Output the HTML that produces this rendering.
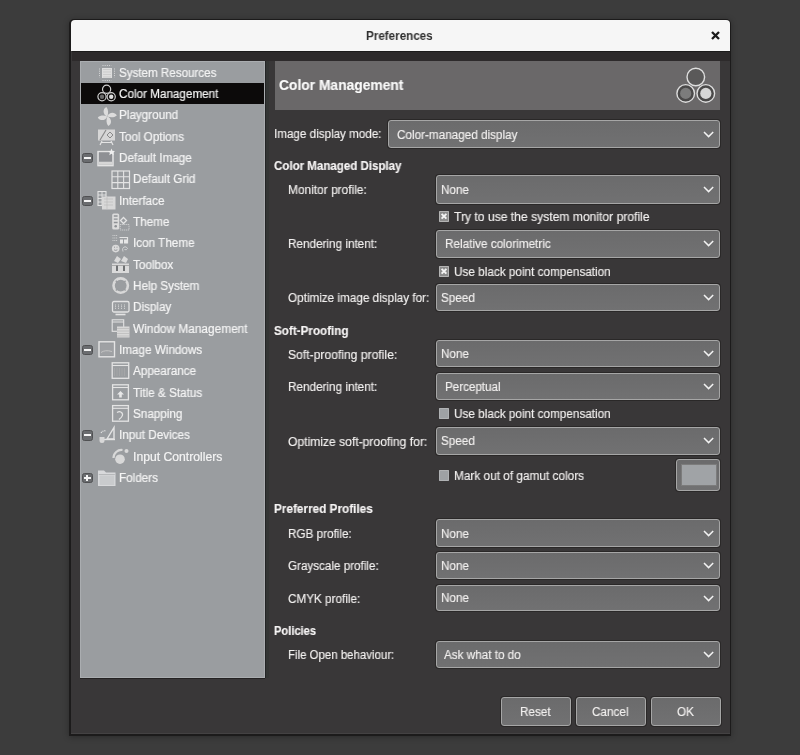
<!DOCTYPE html>
<html><head><meta charset="utf-8"><style>
html,body{margin:0;padding:0;width:800px;height:755px;overflow:hidden;background:#3c3c3c;}
body{position:relative;font-family:"Liberation Sans",sans-serif;}
.t{position:absolute;white-space:nowrap;transform-origin:0 0;will-change:transform;}
.ic{position:absolute;}
.cb{position:absolute;box-sizing:border-box;background:linear-gradient(#6b6b6c,#717172);border:1px solid #a6a6a6;border-radius:3px;box-shadow:0 0 0 1px #2a2828;}
</style></head><body>
<div style="position:absolute;left:69.2px;top:19px;width:662.3px;height:717px;background:#1c1b1b;border-radius:5px 5px 0 0;box-shadow:0 1px 6px rgba(0,0,0,0.3)"></div>
<div style="position:absolute;left:71.25px;top:20px;width:658.5px;height:713.8px;background:#393738;border-radius:4px 4px 0 0"></div>
<div style="position:absolute;left:71px;top:20px;width:659px;height:30.5px;background:#f6f6f6;border-radius:4px 4px 0 0"></div>
<div style="position:absolute;left:71.5px;top:50.5px;width:658px;height:10.5px;background:#2d2a2b"></div>
<div style="position:absolute;left:71.5px;top:50.5px;width:658px;height:1px;background:#1c1b1b"></div>
<div style="position:absolute;left:71.25px;top:732.6px;width:658.5px;height:1px;background:#444243"></div>
<div class="t" style="left:366.00px;top:29.84px;font-size:12px;line-height:12px;font-weight:bold;color:#303030;transform:scaleX(0.9706);">Preferences</div>
<svg style="position:absolute;left:711px;top:31px" width="9" height="9" viewBox="0 0 9 9"><path d="M1 1L8 8M8 1L1 8" stroke="#1a1a1a" stroke-width="2.3"/></svg>
<div style="position:absolute;left:80px;top:61px;width:185px;height:617px;background:#9a9da0;box-shadow:inset 0 0 0 1px #aaadb0"></div>
<div style="position:absolute;left:265px;top:61px;width:3.5px;height:617px;background:linear-gradient(90deg,#232526 0,#232526 1px,#333534 1px)"></div>
<div style="position:absolute;left:80px;top:678px;width:185px;height:1px;background:#242222"></div>
<div style="position:absolute;left:81px;top:83px;width:183px;height:21px;background:#0c0a0a"></div>
<div class="t" style="left:118.60px;top:66.74px;font-size:12px;line-height:12px;font-weight:normal;color:#f4f4f4;transform:scaleX(0.9672);-webkit-text-stroke:0.2px #f4f4f4;">System Resources</div>
<svg class="ic" style="left:97.00px;top:63.00px" width="20" height="20" viewBox="0 0 20 20"><rect x="5" y="5" width="10" height="10" fill="#dedede"/>
<path d="M6 6.5h8M6 9h8M6 11.5h8M6 14h8" stroke="#c4c4c4" stroke-width="0.7"/>
<path d="M5.5 2.5h9M5.5 17.5h9" stroke="#e4e4e4" stroke-width="1" stroke-dasharray="1 1.2" opacity="0.8"/>
<path d="M2.5 5.5v9M17.5 5.5v9" stroke="#e4e4e4" stroke-width="1" stroke-dasharray="1 1.2" opacity="0.8"/></svg>
<div class="t" style="left:118.60px;top:88.06px;font-size:12px;line-height:12px;font-weight:normal;color:#f4f4f4;transform:scaleX(0.9739);-webkit-text-stroke:0.2px #f4f4f4;">Color Management</div>
<svg class="ic" style="left:97.00px;top:84.32px" width="20" height="20" viewBox="0 0 20 20"><circle cx="9.6" cy="5.2" r="4.1" fill="#0c0a0a" stroke="#d0d0d0" stroke-width="1.2"/>
<circle cx="5" cy="12.8" r="4.1" fill="#0c0a0a" stroke="#d0d0d0" stroke-width="1.2"/>
<circle cx="5" cy="12.8" r="2.2" fill="#6a6a6a"/>
<circle cx="14.2" cy="12.8" r="4.1" fill="#0c0a0a" stroke="#d0d0d0" stroke-width="1.2"/>
<circle cx="14.2" cy="12.8" r="2.2" fill="#e0e0e0"/></svg>
<div class="t" style="left:118.60px;top:109.38px;font-size:12px;line-height:12px;font-weight:normal;color:#f4f4f4;transform:scaleX(0.9750);-webkit-text-stroke:0.2px #f4f4f4;">Playground</div>
<svg class="ic" style="left:97.00px;top:105.64px" width="20" height="20" viewBox="0 0 20 20"><g fill="#dcdcdc" transform="translate(10.3 10.4)">
<path d="M0 0C-4.5 -1.5 -5 -7.5 -1 -9.5C1.2 -7 1.2 -3 0 0Z"/>
<path d="M0 0C-4.5 -1.5 -5 -7.5 -1 -9.5C1.2 -7 1.2 -3 0 0Z" transform="rotate(90)"/>
<path d="M0 0C-4.5 -1.5 -5 -7.5 -1 -9.5C1.2 -7 1.2 -3 0 0Z" transform="rotate(180)"/>
<path d="M0 0C-4.5 -1.5 -5 -7.5 -1 -9.5C1.2 -7 1.2 -3 0 0Z" transform="rotate(270)"/>
</g></svg>
<div class="t" style="left:118.60px;top:130.70px;font-size:12px;line-height:12px;font-weight:normal;color:#f4f4f4;transform:scaleX(0.9750);-webkit-text-stroke:0.2px #f4f4f4;">Tool Options</div>
<svg class="ic" style="left:97.00px;top:126.96px" width="20" height="20" viewBox="0 0 20 20"><rect x="1" y="2.5" width="17" height="11" fill="#d6d6d6"/>
<path d="M3 13L9 3" stroke="#8a8a8a" stroke-width="1.2"/>
<path d="M10 8l3-3 3 3-3 3z" fill="none" stroke="#8a8a8a" stroke-width="1"/>
<path d="M3 18L5 14M16 18L14 14M4 15.5h11" stroke="#e4e4e4" stroke-width="1.2"/></svg>
<div class="t" style="left:118.60px;top:152.02px;font-size:12px;line-height:12px;font-weight:normal;color:#f4f4f4;transform:scaleX(0.9750);-webkit-text-stroke:0.2px #f4f4f4;">Default Image</div>
<svg class="ic" style="left:97.00px;top:148.28px" width="20" height="20" viewBox="0 0 20 20"><rect x="1" y="3.6" width="15" height="14" fill="none" stroke="#e4e4e4" stroke-width="1.5"/>
<rect x="2" y="4.5" width="13" height="9" fill="#8e9094"/>
<rect x="2" y="13.8" width="13" height="3" fill="#d6d6d6"/>
<path d="M14.5 0.5l1 2.4 2.5 0.2-1.9 1.6 0.6 2.5-2.2-1.4-2.2 1.4 0.6-2.5-1.9-1.6 2.5-0.2z" fill="#efefef"/></svg>
<div style="position:absolute;left:82.2px;top:152.9px;width:10.6px;height:10.6px;background:#6a6c6f;border-radius:2.5px;border:1px solid #505153;box-sizing:border-box"></div>
<div style="position:absolute;left:84.2px;top:157.2px;width:6.4px;height:2px;background:#f4f4f4"></div>
<div class="t" style="left:132.60px;top:173.34px;font-size:12px;line-height:12px;font-weight:normal;color:#f4f4f4;transform:scaleX(0.9750);-webkit-text-stroke:0.2px #f4f4f4;">Default Grid</div>
<svg class="ic" style="left:111.30px;top:169.60px" width="20" height="20" viewBox="0 0 20 20"><rect x="1" y="1" width="17.5" height="17.5" fill="none" stroke="#e4e4e4" stroke-width="1.2"/>
<path d="M6.8 1v17.5M12.6 1v17.5M1 6.8h17.5M1 12.6h17.5" stroke="#e4e4e4" stroke-width="1.1"/></svg>
<div class="t" style="left:118.60px;top:194.66px;font-size:12px;line-height:12px;font-weight:normal;color:#f4f4f4;transform:scaleX(0.9750);-webkit-text-stroke:0.2px #f4f4f4;">Interface</div>
<svg class="ic" style="left:97.00px;top:190.92px" width="20" height="20" viewBox="0 0 20 20"><rect x="1" y="0.5" width="8" height="14" fill="none" stroke="#e4e4e4" stroke-width="1.1"/>
<path d="M1 4h8M1 7.5h8M1 11h8M5 0.5v14" stroke="#e4e4e4" stroke-width="0.9"/>
<rect x="5" y="5.5" width="13.5" height="13" fill="#d8d8d8"/>
<path d="M7 8h9M7 11h9M7 14h9M10 6v12" stroke="#b8b8b8" stroke-width="0.6"/></svg>
<div style="position:absolute;left:82.2px;top:195.5px;width:10.6px;height:10.6px;background:#6a6c6f;border-radius:2.5px;border:1px solid #505153;box-sizing:border-box"></div>
<div style="position:absolute;left:84.2px;top:199.8px;width:6.4px;height:2px;background:#f4f4f4"></div>
<div class="t" style="left:132.60px;top:215.98px;font-size:12px;line-height:12px;font-weight:normal;color:#f4f4f4;transform:scaleX(0.9750);-webkit-text-stroke:0.2px #f4f4f4;">Theme</div>
<svg class="ic" style="left:111.30px;top:212.24px" width="20" height="20" viewBox="0 0 20 20"><rect x="1.2" y="1.5" width="7" height="16" rx="1.5" fill="#dcdcdc"/>
<path d="M2.8 4h3.8M2.8 7.2h3.8M2.8 10.5h3.8" stroke="#8e9195" stroke-width="1.3"/>
<circle cx="4.7" cy="14.3" r="1.3" fill="#8e9195"/>
<path d="M12.5 5.5l3 3-3 3-3-3z" fill="none" stroke="#e4e4e4" stroke-width="1.3"/>
<rect x="9.2" y="12.5" width="8.8" height="5.5" fill="none" stroke="#e4e4e4" stroke-width="0.9" stroke-dasharray="1.2 0.8" opacity="0.8"/></svg>
<div class="t" style="left:132.60px;top:237.30px;font-size:12px;line-height:12px;font-weight:normal;color:#f4f4f4;transform:scaleX(0.9750);-webkit-text-stroke:0.2px #f4f4f4;">Icon Theme</div>
<svg class="ic" style="left:111.30px;top:233.56px" width="20" height="20" viewBox="0 0 20 20"><path d="M1.5 1.5h5M1.5 4h5M1.5 6.5h5" stroke="#e4e4e4" stroke-width="0.9" stroke-dasharray="1 0.8" opacity="0.8"/>
<path d="M8.5 3.5h8v6" fill="none" stroke="#e4e4e4" stroke-width="1.2"/>
<path d="M9 5.5h3v4h-3zM13 5.5h3v4h-3z" fill="#e6e6e6"/>
<circle cx="4.7" cy="14.6" r="3.8" fill="#dadada"/>
<path d="M3 13.2h1M5.5 13.2h1M3 15.8q1.7 1.2 3.4 0" stroke="#8e9195" stroke-width="0.9" fill="none"/>
<path d="M12 17.5q-1.5-3 1-4.5 2.5-1 3.5 1.5q-1 2-3 1" stroke="#e4e4e4" stroke-width="1" fill="none" opacity="0.7"/></svg>
<div class="t" style="left:132.60px;top:258.62px;font-size:12px;line-height:12px;font-weight:normal;color:#f4f4f4;transform:scaleX(0.9750);-webkit-text-stroke:0.2px #f4f4f4;">Toolbox</div>
<svg class="ic" style="left:111.30px;top:254.88px" width="20" height="20" viewBox="0 0 20 20"><path d="M3 6l3-5 4 3-3 4z" fill="#dadada"/><path d="M10 6l3-5 4 3-2 4z" fill="#dadada"/>
<rect x="1" y="8.5" width="17" height="9.5" fill="#dadada"/>
<path d="M6 10v6M13 10v6" stroke="#707274" stroke-width="2"/>
<path d="M1 10.5h17" stroke="#9a9a9a" stroke-width="0.8"/></svg>
<div class="t" style="left:132.60px;top:279.94px;font-size:12px;line-height:12px;font-weight:normal;color:#f4f4f4;transform:scaleX(0.9750);-webkit-text-stroke:0.2px #f4f4f4;">Help System</div>
<svg class="ic" style="left:111.30px;top:276.20px" width="20" height="20" viewBox="0 0 20 20"><circle cx="9.7" cy="9.6" r="7.2" fill="none" stroke="#d8d8d8" stroke-width="2.6"/>
<path d="M4.8 4.7l2 2M14.6 4.7l-2 2M4.8 14.5l2-2M14.6 14.5l-2-2" stroke="#9a9c9f" stroke-width="1.4"/></svg>
<div class="t" style="left:132.60px;top:301.26px;font-size:12px;line-height:12px;font-weight:normal;color:#f4f4f4;transform:scaleX(0.9750);-webkit-text-stroke:0.2px #f4f4f4;">Display</div>
<svg class="ic" style="left:111.30px;top:297.52px" width="20" height="20" viewBox="0 0 20 20"><rect x="1.5" y="3.5" width="16.5" height="10.5" rx="1.5" fill="none" stroke="#e4e4e4" stroke-width="1.3"/>
<path d="M4.5 6.5v5M7.5 6.5v5M10.5 6.5v5M13.5 6.5v5" stroke="#e4e4e4" stroke-width="0.8" stroke-dasharray="1 0.7"/>
<path d="M4.5 16.5h10" stroke="#e4e4e4" stroke-width="1.6"/></svg>
<div class="t" style="left:132.60px;top:322.58px;font-size:12px;line-height:12px;font-weight:normal;color:#f4f4f4;transform:scaleX(0.9865);-webkit-text-stroke:0.2px #f4f4f4;">Window Management</div>
<svg class="ic" style="left:111.30px;top:318.84px" width="20" height="20" viewBox="0 0 20 20"><rect x="1.2" y="0.8" width="11.5" height="11.5" fill="none" stroke="#e4e4e4" stroke-width="1.1"/>
<path d="M1.2 3h11.5" stroke="#e4e4e4" stroke-width="1"/>
<rect x="6" y="7.5" width="12.5" height="11" fill="#d8d8d8"/>
<path d="M6 9.5h12.5M6 12h12.5M6 14.5h12.5M6 17h12.5" stroke="#b4b4b4" stroke-width="0.6"/></svg>
<div class="t" style="left:118.60px;top:343.90px;font-size:12px;line-height:12px;font-weight:normal;color:#f4f4f4;transform:scaleX(0.9750);-webkit-text-stroke:0.2px #f4f4f4;">Image Windows</div>
<svg class="ic" style="left:97.00px;top:340.16px" width="20" height="20" viewBox="0 0 20 20"><rect x="2" y="1.8" width="15.5" height="15" fill="none" stroke="#e4e4e4" stroke-width="1.4"/>
<rect x="3.5" y="4" width="12.5" height="11" fill="#9fa1a4"/>
<path d="M4 12.5q4-3 11-1" stroke="#c4c4c4" stroke-width="1" fill="none"/></svg>
<div style="position:absolute;left:82.2px;top:344.8px;width:10.6px;height:10.6px;background:#6a6c6f;border-radius:2.5px;border:1px solid #505153;box-sizing:border-box"></div>
<div style="position:absolute;left:84.2px;top:349.1px;width:6.4px;height:2px;background:#f4f4f4"></div>
<div class="t" style="left:132.60px;top:365.22px;font-size:12px;line-height:12px;font-weight:normal;color:#f4f4f4;transform:scaleX(0.9750);-webkit-text-stroke:0.2px #f4f4f4;">Appearance</div>
<svg class="ic" style="left:111.30px;top:361.48px" width="20" height="20" viewBox="0 0 20 20"><rect x="1.2" y="1.8" width="16.5" height="15.5" fill="none" stroke="#e4e4e4" stroke-width="1.3"/>
<path d="M1.2 4.5h16.5" stroke="#e4e4e4" stroke-width="1.1"/>
<path d="M3.5 7v8M6 7v8M8.5 7v8M11 7v8M13.5 7v8" stroke="#acacac" stroke-width="0.6"/></svg>
<div class="t" style="left:132.60px;top:386.54px;font-size:12px;line-height:12px;font-weight:normal;color:#f4f4f4;transform:scaleX(0.9750);-webkit-text-stroke:0.2px #f4f4f4;">Title &amp; Status</div>
<svg class="ic" style="left:111.30px;top:382.80px" width="20" height="20" viewBox="0 0 20 20"><rect x="1.6" y="1.8" width="15.8" height="15" fill="none" stroke="#e4e4e4" stroke-width="1.3"/>
<path d="M1.6 4.5h15.8" stroke="#e4e4e4" stroke-width="1.1"/>
<path d="M9.5 8l3.5 3.5h-2.2v3h-2.6v-3h-2.2z" fill="#e8e8e8"/></svg>
<div class="t" style="left:132.60px;top:407.86px;font-size:12px;line-height:12px;font-weight:normal;color:#f4f4f4;transform:scaleX(0.9750);-webkit-text-stroke:0.2px #f4f4f4;">Snapping</div>
<svg class="ic" style="left:111.30px;top:404.12px" width="20" height="20" viewBox="0 0 20 20"><rect x="1.6" y="1.6" width="15.8" height="15.6" fill="none" stroke="#e4e4e4" stroke-width="1.3"/>
<path d="M1.6 4.3h15.8" stroke="#e4e4e4" stroke-width="1.1"/>
<path d="M6 8.5q3-2 5 0.5t-3 6.5" stroke="#e4e4e4" stroke-width="1.3" fill="none"/></svg>
<div class="t" style="left:118.60px;top:429.18px;font-size:12px;line-height:12px;font-weight:normal;color:#f4f4f4;transform:scaleX(0.9750);-webkit-text-stroke:0.2px #f4f4f4;">Input Devices</div>
<svg class="ic" style="left:97.00px;top:425.44px" width="20" height="20" viewBox="0 0 20 20"><path d="M10 14L17 2.5V14z" fill="none" stroke="#e4e4e4" stroke-width="1.4"/>
<path d="M4 8q2-3 5-2" stroke="#e4e4e4" stroke-width="1.1" fill="none" stroke-dasharray="1.2 0.8"/>
<path d="M6 14.5h12" stroke="#e4e4e4" stroke-width="1.4"/>
<path d="M2.5 12h5v3.5a2.5 2.5 0 0 1-5 0z" fill="#d8d8d8"/></svg>
<div style="position:absolute;left:82.2px;top:430.0px;width:10.6px;height:10.6px;background:#6a6c6f;border-radius:2.5px;border:1px solid #505153;box-sizing:border-box"></div>
<div style="position:absolute;left:84.2px;top:434.3px;width:6.4px;height:2px;background:#f4f4f4"></div>
<div class="t" style="left:132.60px;top:450.50px;font-size:12px;line-height:12px;font-weight:normal;color:#f4f4f4;transform:scaleX(1.0142);-webkit-text-stroke:0.2px #f4f4f4;">Input Controllers</div>
<svg class="ic" style="left:111.30px;top:446.76px" width="20" height="20" viewBox="0 0 20 20"><path d="M2.5 11a8 8 0 0 1 9-8" stroke="#d8d8d8" stroke-width="2.2" fill="none"/>
<circle cx="9" cy="12.2" r="4.8" fill="#d8d8d8"/>
<circle cx="15.5" cy="4" r="2" fill="#d8d8d8"/></svg>
<div class="t" style="left:118.60px;top:471.82px;font-size:12px;line-height:12px;font-weight:normal;color:#f4f4f4;transform:scaleX(0.9750);-webkit-text-stroke:0.2px #f4f4f4;">Folders</div>
<svg class="ic" style="left:97.00px;top:468.08px" width="20" height="20" viewBox="0 0 20 20"><path d="M1 2.5h6l2 2h9.5v13.5H1z" fill="#d8d9db"/>
<path d="M1.8 6.5h16" stroke="#b6b8ba" stroke-width="1"/>
<rect x="2.6" y="7.5" width="14.6" height="9.5" fill="#c9cbcd"/></svg>
<div style="position:absolute;left:82.2px;top:472.7px;width:10.6px;height:10.6px;background:#6a6c6f;border-radius:2.5px;border:1px solid #505153;box-sizing:border-box"></div>
<div style="position:absolute;left:84.2px;top:477.0px;width:6.4px;height:2px;background:#f4f4f4"></div>
<div style="position:absolute;left:86.4px;top:474.8px;width:2px;height:6.4px;background:#f4f4f4"></div>
<div style="position:absolute;left:275px;top:61px;width:445px;height:49px;background:#6a6869"></div>
<div class="t" style="left:279.45px;top:78.05px;font-size:14px;line-height:14px;font-weight:bold;color:#fafafa;transform:scaleX(0.9872);-webkit-text-stroke:0.15px #fafafa;">Color Management</div>
<svg style="position:absolute;left:672px;top:62px" width="48" height="46" viewBox="672 62 48 46">
<circle cx="695.8" cy="77" r="8.8" fill="#5a5959" stroke="#dedede" stroke-width="1.4"/>
<circle cx="685.7" cy="93.4" r="8.8" fill="#4a4949" stroke="#dedede" stroke-width="1.4"/>
<circle cx="685.7" cy="93.4" r="5.6" fill="#7c7c7c"/>
<circle cx="705.8" cy="93.4" r="8.8" fill="#4a4949" stroke="#dedede" stroke-width="1.4"/>
<circle cx="705.8" cy="93.4" r="5.6" fill="#d6d6d6"/>
</svg>
<div class="t" style="left:274.20px;top:127.62px;font-size:12.5px;line-height:12.5px;font-weight:normal;color:#f2f0ef;transform:scaleX(0.9320);-webkit-text-stroke:0.15px #f2f0ef;">Image display mode:</div>
<div class="cb" style="left:388.0px;top:120.0px;width:332.0px;height:28.0px"></div>
<svg style="position:absolute;left:702.5px;top:130.7px" width="12" height="7" viewBox="0 0 12 7"><path d="M1 1L5.6 5.6L10.2 1" fill="none" stroke="#f2f2f2" stroke-width="1.5"/></svg>
<div class="t" style="left:396.70px;top:128.52px;font-size:12.5px;line-height:12.5px;font-weight:normal;color:#f2f0ef;transform:scaleX(0.9374);-webkit-text-stroke:0.15px #f2f0ef;">Color-managed display</div>
<div class="t" style="left:274.20px;top:160.12px;font-size:12.5px;line-height:12.5px;font-weight:bold;color:#f6f4f4;transform:scaleX(0.9223);-webkit-text-stroke:0.15px #f6f4f4;">Color Managed Display</div>
<div class="t" style="left:287.95px;top:183.87px;font-size:12.5px;line-height:12.5px;font-weight:normal;color:#f2f0ef;transform:scaleX(0.9524);-webkit-text-stroke:0.15px #f2f0ef;">Monitor profile:</div>
<div class="cb" style="left:435.5px;top:175.3px;width:284.5px;height:28.7px"></div>
<svg style="position:absolute;left:702.5px;top:186.3px" width="12" height="7" viewBox="0 0 12 7"><path d="M1 1L5.6 5.6L10.2 1" fill="none" stroke="#f2f2f2" stroke-width="1.5"/></svg>
<div class="t" style="left:440.80px;top:184.17px;font-size:12.5px;line-height:12.5px;font-weight:normal;color:#f2f0ef;transform:scaleX(0.9334);-webkit-text-stroke:0.15px #f2f0ef;">None</div>
<div style="position:absolute;left:438.5px;top:211.0px;width:10px;height:10.5px;background:#8c8c8c;box-shadow:inset 0 0 0 1px #b4b4b4;border-radius:1px"></div>
<svg style="position:absolute;left:438.5px;top:211.0px" width="10" height="10.5" viewBox="0 0 10 10.5"><path d="M2.6 2.8L7.4 7.7M7.4 2.8L2.6 7.7" stroke="#f4f4f4" stroke-width="1.9"/></svg>
<div class="t" style="left:453.80px;top:210.82px;font-size:12.5px;line-height:12.5px;font-weight:normal;color:#f2f0ef;transform:scaleX(0.9697);-webkit-text-stroke:0.15px #f2f0ef;">Try to use the system monitor profile</div>
<div class="t" style="left:287.95px;top:238.12px;font-size:12.5px;line-height:12.5px;font-weight:normal;color:#f2f0ef;transform:scaleX(0.9375);-webkit-text-stroke:0.15px #f2f0ef;">Rendering intent:</div>
<div class="cb" style="left:435.5px;top:230.0px;width:284.5px;height:27.5px"></div>
<svg style="position:absolute;left:702.5px;top:240.4px" width="12" height="7" viewBox="0 0 12 7"><path d="M1 1L5.6 5.6L10.2 1" fill="none" stroke="#f2f2f2" stroke-width="1.5"/></svg>
<div class="t" style="left:444.50px;top:238.27px;font-size:12.5px;line-height:12.5px;font-weight:normal;color:#f2f0ef;transform:scaleX(0.9402);-webkit-text-stroke:0.15px #f2f0ef;">Relative colorimetric</div>
<div style="position:absolute;left:438.5px;top:266.0px;width:10px;height:10.5px;background:#8c8c8c;box-shadow:inset 0 0 0 1px #b4b4b4;border-radius:1px"></div>
<svg style="position:absolute;left:438.5px;top:266.0px" width="10" height="10.5" viewBox="0 0 10 10.5"><path d="M2.6 2.8L7.4 7.7M7.4 2.8L2.6 7.7" stroke="#f4f4f4" stroke-width="1.9"/></svg>
<div class="t" style="left:453.80px;top:265.82px;font-size:12.5px;line-height:12.5px;font-weight:normal;color:#f2f0ef;transform:scaleX(0.9399);-webkit-text-stroke:0.15px #f2f0ef;">Use black point compensation</div>
<div class="t" style="left:287.95px;top:292.12px;font-size:12.5px;line-height:12.5px;font-weight:normal;color:#f2f0ef;transform:scaleX(0.9369);-webkit-text-stroke:0.15px #f2f0ef;">Optimize image display for:</div>
<div class="cb" style="left:435.5px;top:284.0px;width:284.5px;height:27.0px"></div>
<svg style="position:absolute;left:702.5px;top:294.2px" width="12" height="7" viewBox="0 0 12 7"><path d="M1 1L5.6 5.6L10.2 1" fill="none" stroke="#f2f2f2" stroke-width="1.5"/></svg>
<div class="t" style="left:440.80px;top:292.02px;font-size:12.5px;line-height:12.5px;font-weight:normal;color:#f2f0ef;transform:scaleX(0.9358);-webkit-text-stroke:0.15px #f2f0ef;">Speed</div>
<div class="t" style="left:274.20px;top:324.62px;font-size:12.5px;line-height:12.5px;font-weight:bold;color:#f6f4f4;transform:scaleX(0.9331);-webkit-text-stroke:0.15px #f6f4f4;">Soft-Proofing</div>
<div class="t" style="left:287.95px;top:348.87px;font-size:12.5px;line-height:12.5px;font-weight:normal;color:#f2f0ef;transform:scaleX(0.9706);-webkit-text-stroke:0.15px #f2f0ef;">Soft-proofing profile:</div>
<div class="cb" style="left:435.5px;top:340.0px;width:284.5px;height:27.0px"></div>
<svg style="position:absolute;left:702.5px;top:350.2px" width="12" height="7" viewBox="0 0 12 7"><path d="M1 1L5.6 5.6L10.2 1" fill="none" stroke="#f2f2f2" stroke-width="1.5"/></svg>
<div class="t" style="left:440.80px;top:348.02px;font-size:12.5px;line-height:12.5px;font-weight:normal;color:#f2f0ef;transform:scaleX(0.9334);-webkit-text-stroke:0.15px #f2f0ef;">None</div>
<div class="t" style="left:287.95px;top:381.12px;font-size:12.5px;line-height:12.5px;font-weight:normal;color:#f2f0ef;transform:scaleX(0.9375);-webkit-text-stroke:0.15px #f2f0ef;">Rendering intent:</div>
<div class="cb" style="left:435.5px;top:372.8px;width:284.5px;height:27.2px"></div>
<svg style="position:absolute;left:702.5px;top:383.1px" width="12" height="7" viewBox="0 0 12 7"><path d="M1 1L5.6 5.6L10.2 1" fill="none" stroke="#f2f2f2" stroke-width="1.5"/></svg>
<div class="t" style="left:444.60px;top:380.89px;font-size:12.5px;line-height:12.5px;font-weight:normal;color:#f2f0ef;transform:scaleX(0.9303);-webkit-text-stroke:0.15px #f2f0ef;">Perceptual</div>
<div style="position:absolute;left:438.5px;top:408.2px;width:10px;height:10.5px;background:#9ea1a4;box-shadow:inset 0 0 0 1px #b0b2b4;border-radius:1px"></div>
<div class="t" style="left:453.80px;top:408.02px;font-size:12.5px;line-height:12.5px;font-weight:normal;color:#f2f0ef;transform:scaleX(0.9399);-webkit-text-stroke:0.15px #f2f0ef;">Use black point compensation</div>
<div class="t" style="left:287.95px;top:435.62px;font-size:12.5px;line-height:12.5px;font-weight:normal;color:#f2f0ef;transform:scaleX(0.9683);-webkit-text-stroke:0.15px #f2f0ef;">Optimize soft-proofing for:</div>
<div class="cb" style="left:435.5px;top:427.0px;width:284.5px;height:27.5px"></div>
<svg style="position:absolute;left:702.5px;top:437.4px" width="12" height="7" viewBox="0 0 12 7"><path d="M1 1L5.6 5.6L10.2 1" fill="none" stroke="#f2f2f2" stroke-width="1.5"/></svg>
<div class="t" style="left:440.80px;top:435.27px;font-size:12.5px;line-height:12.5px;font-weight:normal;color:#f2f0ef;transform:scaleX(0.9358);-webkit-text-stroke:0.15px #f2f0ef;">Speed</div>
<div style="position:absolute;left:438.5px;top:470.0px;width:10px;height:10.5px;background:#9ea1a4;box-shadow:inset 0 0 0 1px #b0b2b4;border-radius:1px"></div>
<div class="t" style="left:453.80px;top:469.82px;font-size:12.5px;line-height:12.5px;font-weight:normal;color:#f2f0ef;transform:scaleX(0.9450);-webkit-text-stroke:0.15px #f2f0ef;">Mark out of gamut colors</div>
<div class="cb" style="left:675.7px;top:459.4px;width:44.6px;height:31.5px"></div>
<div style="position:absolute;left:681.7px;top:464.6px;width:34px;height:20.5px;background:#a0a3a6;box-shadow:0 0 0 1px #7c7c7c"></div>
<div class="t" style="left:274.20px;top:503.37px;font-size:12.5px;line-height:12.5px;font-weight:bold;color:#f6f4f4;transform:scaleX(0.9412);-webkit-text-stroke:0.15px #f6f4f4;">Preferred Profiles</div>
<div class="t" style="left:287.95px;top:527.62px;font-size:12.5px;line-height:12.5px;font-weight:normal;color:#f2f0ef;transform:scaleX(0.9358);-webkit-text-stroke:0.15px #f2f0ef;">RGB profile:</div>
<div class="cb" style="left:435.5px;top:519.2px;width:284.5px;height:27.5px"></div>
<svg style="position:absolute;left:702.5px;top:529.7px" width="12" height="7" viewBox="0 0 12 7"><path d="M1 1L5.6 5.6L10.2 1" fill="none" stroke="#f2f2f2" stroke-width="1.5"/></svg>
<div class="t" style="left:440.80px;top:527.52px;font-size:12.5px;line-height:12.5px;font-weight:normal;color:#f2f0ef;transform:scaleX(0.9334);-webkit-text-stroke:0.15px #f2f0ef;">None</div>
<div class="t" style="left:287.95px;top:560.12px;font-size:12.5px;line-height:12.5px;font-weight:normal;color:#f2f0ef;transform:scaleX(0.9330);-webkit-text-stroke:0.15px #f2f0ef;">Grayscale profile:</div>
<div class="cb" style="left:435.5px;top:551.8px;width:284.5px;height:27.5px"></div>
<svg style="position:absolute;left:702.5px;top:562.2px" width="12" height="7" viewBox="0 0 12 7"><path d="M1 1L5.6 5.6L10.2 1" fill="none" stroke="#f2f2f2" stroke-width="1.5"/></svg>
<div class="t" style="left:440.80px;top:560.02px;font-size:12.5px;line-height:12.5px;font-weight:normal;color:#f2f0ef;transform:scaleX(0.9334);-webkit-text-stroke:0.15px #f2f0ef;">None</div>
<div class="t" style="left:287.95px;top:593.12px;font-size:12.5px;line-height:12.5px;font-weight:normal;color:#f2f0ef;transform:scaleX(0.9361);-webkit-text-stroke:0.15px #f2f0ef;">CMYK profile:</div>
<div class="cb" style="left:435.5px;top:584.5px;width:284.5px;height:26.8px"></div>
<svg style="position:absolute;left:702.5px;top:594.6px" width="12" height="7" viewBox="0 0 12 7"><path d="M1 1L5.6 5.6L10.2 1" fill="none" stroke="#f2f2f2" stroke-width="1.5"/></svg>
<div class="t" style="left:440.80px;top:592.39px;font-size:12.5px;line-height:12.5px;font-weight:normal;color:#f2f0ef;transform:scaleX(0.9334);-webkit-text-stroke:0.15px #f2f0ef;">None</div>
<div class="t" style="left:274.20px;top:624.62px;font-size:12.5px;line-height:12.5px;font-weight:bold;color:#f6f4f4;transform:scaleX(0.8889);-webkit-text-stroke:0.15px #f6f4f4;">Policies</div>
<div class="t" style="left:287.95px;top:648.87px;font-size:12.5px;line-height:12.5px;font-weight:normal;color:#f2f0ef;transform:scaleX(0.9156);-webkit-text-stroke:0.15px #f2f0ef;">File Open behaviour:</div>
<div class="cb" style="left:435.5px;top:640.5px;width:284.5px;height:27.0px"></div>
<svg style="position:absolute;left:702.5px;top:650.7px" width="12" height="7" viewBox="0 0 12 7"><path d="M1 1L5.6 5.6L10.2 1" fill="none" stroke="#f2f2f2" stroke-width="1.5"/></svg>
<div class="t" style="left:444.20px;top:648.52px;font-size:12.5px;line-height:12.5px;font-weight:normal;color:#f2f0ef;transform:scaleX(0.9360);-webkit-text-stroke:0.15px #f2f0ef;">Ask what to do</div>
<div class="cb" style="left:501.0px;top:697.2px;width:70.2px;height:28.6px"></div>
<div class="t" style="left:520.04px;top:705.62px;font-size:12.5px;line-height:12.5px;font-weight:normal;color:#f2f0ef;transform:scaleX(0.9363);-webkit-text-stroke:0.15px #f2f0ef;">Reset</div>
<div class="cb" style="left:576.0px;top:697.2px;width:69.6px;height:28.6px"></div>
<div class="t" style="left:591.79px;top:705.62px;font-size:12.5px;line-height:12.5px;font-weight:normal;color:#f2f0ef;transform:scaleX(0.9359);-webkit-text-stroke:0.15px #f2f0ef;">Cancel</div>
<div class="cb" style="left:651.0px;top:697.2px;width:69.6px;height:28.6px"></div>
<div class="t" style="left:676.54px;top:705.62px;font-size:12.5px;line-height:12.5px;font-weight:normal;color:#f2f0ef;transform:scaleX(0.9362);-webkit-text-stroke:0.15px #f2f0ef;">OK</div>
</body></html>
